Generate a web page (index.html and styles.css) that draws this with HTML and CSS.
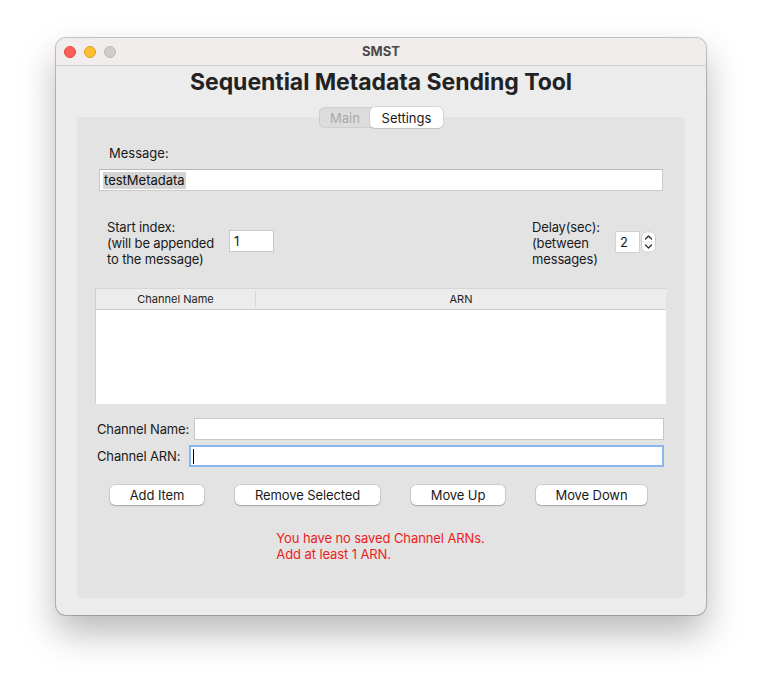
FILE: index.html
```html
<!DOCTYPE html>
<html>
<head>
<meta charset="utf-8">
<link rel="stylesheet" href="styles.css">
</head>
<body>
<div class="window">
  <div class="titlebar">
    <div class="lights">
      <span class="light red"></span>
      <span class="light yellow"></span>
      <span class="light grey"></span>
    </div>
    <div class="wtitle">SMST</div>
  </div>
  <div class="content">
    <h1 class="heading">Sequential Metadata Sending Tool</h1>
    <div class="tabs">
      <div class="tab tab-off">Main</div>
      <div class="tab tab-on">Settings</div>
    </div>
    <div class="panel">
      <div class="msg-label">Message:</div>
      <div class="msg-input"><span class="sel">testMetadata</span></div>
      <div class="opts">
        <div class="opt-left">
          <div class="lbl">Start index:<br>(will be appended<br>to the message)</div>
          <div class="small-input">1</div>
        </div>
        <div class="opt-right">
          <div class="lbl">Delay(sec):<br>(between<br>messages)</div>
          <div class="spin">
            <div class="spin-input">2</div>
            <svg class="stepper" width="17" height="22" viewBox="0 0 17 22">
              <rect x="1.5" y="1" width="14" height="20" rx="5" fill="#ffffff" stroke="#cfcfcf" stroke-width="1"/>
              <line x1="1.5" y1="11" x2="15.5" y2="11" stroke="#e2e2e2"/>
              <path d="M5.5 8 L8.5 5 L11.5 8" fill="none" stroke="#333" stroke-width="1.4" stroke-linecap="round" stroke-linejoin="round"/>
              <path d="M5.5 14 L8.5 17 L11.5 14" fill="none" stroke="#333" stroke-width="1.4" stroke-linecap="round" stroke-linejoin="round"/>
            </svg>
          </div>
        </div>
      </div>
      <div class="table">
        <div class="thead">
          <div class="th th-name">Channel Name</div>
          <div class="th th-arn">ARN</div>
        </div>
        <div class="tbody"></div>
      </div>
      <div class="field-row row-name">
        <div class="flabel">Channel Name:</div>
        <div class="finput"></div>
      </div>
      <div class="field-row row-arn">
        <div class="flabel">Channel ARN:</div>
        <div class="finput focus"><span class="caret"></span></div>
      </div>
      <div class="buttons">
        <div class="btn btn-add">Add Item</div>
        <div class="btn btn-remove">Remove Selected</div>
        <div class="btn btn-up">Move Up</div>
        <div class="btn btn-down">Move Down</div>
      </div>
      <div class="error">You have no saved Channel ARNs.<br>Add at least 1 ARN.</div>
    </div>
  </div>
</div>
</body>
</html>
```

FILE: styles.css
```css
html, body {
  margin: 0;
  padding: 0;
  background: #ffffff;
}
body {
  font-family: "Inter", "Liberation Sans", sans-serif;
  font-size: 13px;
  color: #1a1a1a;
  width: 762px;
  height: 690px;
  overflow: hidden;
}
.window {
  margin: 38px 0 0 56px;
  width: 650px;
  height: 577px;
  border-radius: 10px;
  background: #ececec;
  box-shadow: 0 0 0 1px rgba(0,0,0,0.22), 0 18px 36px rgba(0,0,0,0.28);
  overflow: hidden;
  display: flex;
  flex-direction: column;
}
.titlebar {
  height: 27px;
  background: #f1eded;
  border-bottom: 1px solid #d6d1d1;
  display: flex;
  align-items: center;
  position: relative;
}
.lights {
  display: flex;
  gap: 8px;
  padding-left: 8px;
}
.light {
  width: 12px;
  height: 12px;
  border-radius: 50%;
  box-sizing: border-box;
}
.red { background: #fe5f57; border: 0.5px solid #e14640; }
.yellow { background: #febc2e; border: 0.5px solid #dfa023; }
.grey { background: #d1cdcd; border: 0.5px solid #bdb9b9; }
.wtitle {
  position: absolute;
  left: 0;
  right: 0;
  text-align: center;
  font-weight: 700;
  font-size: 13px;
  color: #4a4a4a;
  top: 5px;
}
.content {
  flex: 1;
  display: flex;
  flex-direction: column;
  align-items: center;
  padding: 0 21px 17px 21px;
}
.heading {
  margin: 3px 0 0 0;
  font-size: 23px;
  font-weight: 700;
  color: #222;
  line-height: 26px;
  letter-spacing: -0.05px;
}
.tabs {
  margin-top: 12px;
  margin-bottom: -11px;
  display: flex;
  height: 21px;
  background: #dcdcdc;
  border-radius: 5px;
  border: 1px solid #cfcfcf;
  box-sizing: border-box;
  position: relative;
  z-index: 1;
  width: 124px;
}
.tab {
  display: flex;
  align-items: center;
  justify-content: center;
  font-size: 13px;
  line-height: 16px;
}
.tab-off {
  width: 50px;
  color: #a9a9a9;
}
.tab-on {
  flex: 1;
  background: #ffffff;
  border-radius: 5px;
  margin: -1px -1px -1px 0;
  box-shadow: 0 0 0 0.5px #c2c2c2, 0 1px 1px rgba(0,0,0,0.15);
  color: #1a1a1a;
}
.panel {
  align-self: stretch;
  flex: 1;
  background: #e3e3e3;
  border-radius: 5px;
  display: flex;
  flex-direction: column;
  padding: 28px 19px 0 18px;
}
.msg-label {
  line-height: 16px;
  padding-left: 14px;
}
.msg-input {
  margin: 8px 3px 0 4px;
  height: 22px;
  box-sizing: border-box;
  background: #fff;
  border: 1px solid #c8c8c8;
  border-top-color: #b8b8b8;
  display: flex;
  align-items: center;
  padding-left: 3px;
  font-size: 13px;
}
.sel {
  background: #d4d4d4;
  line-height: 17px;
  padding: 0 1px;
  color: #111;
}
.opts {
  margin-top: 28px;
  display: flex;
  justify-content: space-between;
  align-items: center;
  padding: 0 9px 0 12px;
}
.opt-left, .opt-right {
  display: flex;
  align-items: center;
}
.lbl {
  line-height: 16px;
  letter-spacing: -0.15px;
}
.opt-left .lbl {
  width: 122px;
}
.small-input {
  width: 45px;
  height: 22px;
  box-sizing: border-box;
  background: #fff;
  border: 1px solid #c8c8c8;
  padding-left: 4px;
  line-height: 20px;
  margin-top: -4px;
}
.opt-right .lbl {
  width: 83px;
}
.spin {
  display: flex;
  align-items: center;
  margin-top: -2px;
}
.spin-input {
  width: 25px;
  height: 22px;
  box-sizing: border-box;
  background: #fff;
  border: 1px solid #d2d2d2;
  padding-left: 4px;
  line-height: 20px;
}
.stepper {
  display: block;
}
.table {
  margin-top: 21px;
  height: 116px;
  display: flex;
  flex-direction: column;
  background: #fff;
  border-left: 1px solid #d0d0d0;
}
.thead {
  height: 22px;
  box-sizing: border-box;
  background: #ececec;
  border-top: 1px solid #d6d6d6;
  border-bottom: 1px solid #cdcdcd;
  display: flex;
  align-items: center;
  font-size: 11px;
  color: #222;
}
.th {
  text-align: center;
  line-height: 14px;
}
.th-name {
  width: 159px;
  border-right: 1px solid #d6d6d6;
  height: 16px;
  line-height: 16px;
}
.th-arn {
  flex: 1;
}
.tbody {
  flex: 1;
  background: #fff;
}
.field-row {
  display: flex;
  align-items: center;
  padding-left: 2px;
  margin-right: 2px;
}
.row-name { margin-top: 14px; }
.row-arn { margin-top: 5px; }
.flabel {
  line-height: 16px;
  letter-spacing: -0.15px;
  white-space: nowrap;
}
.row-name .flabel { width: 97px; }
.row-arn .flabel { width: 92px; }
.finput {
  flex: 1;
  height: 22px;
  box-sizing: border-box;
  background: #fff;
  border: 1px solid #c8c8c8;
  display: flex;
  align-items: center;
}
.finput.focus {
  border: 2px solid #8ab7f2;
  padding-left: 2px;
}
.caret {
  width: 1px;
  height: 15px;
  background: #000;
}
.buttons {
  margin-top: 18px;
  display: flex;
  gap: 31px;
  padding-left: 15px;
}
.btn {
  height: 20px;
  box-sizing: border-box;
  background: #fff;
  border-radius: 5px;
  box-shadow: 0 0 0 0.5px rgba(0,0,0,0.18), 0 1px 1.5px rgba(0,0,0,0.2);
  display: flex;
  align-items: center;
  justify-content: center;
  line-height: 16px;
  color: #1a1a1a;
  letter-spacing: -0.1px;
}
.btn-add { width: 94px; }
.btn-remove { width: 145px; }
.btn-up { width: 94px; }
.btn-down { width: 111px; }
.error {
  margin-top: 25px;
  align-self: center;
  color: #ee1d1d;
  line-height: 16px;
  text-align: left;
  letter-spacing: -0.1px;
}
```
